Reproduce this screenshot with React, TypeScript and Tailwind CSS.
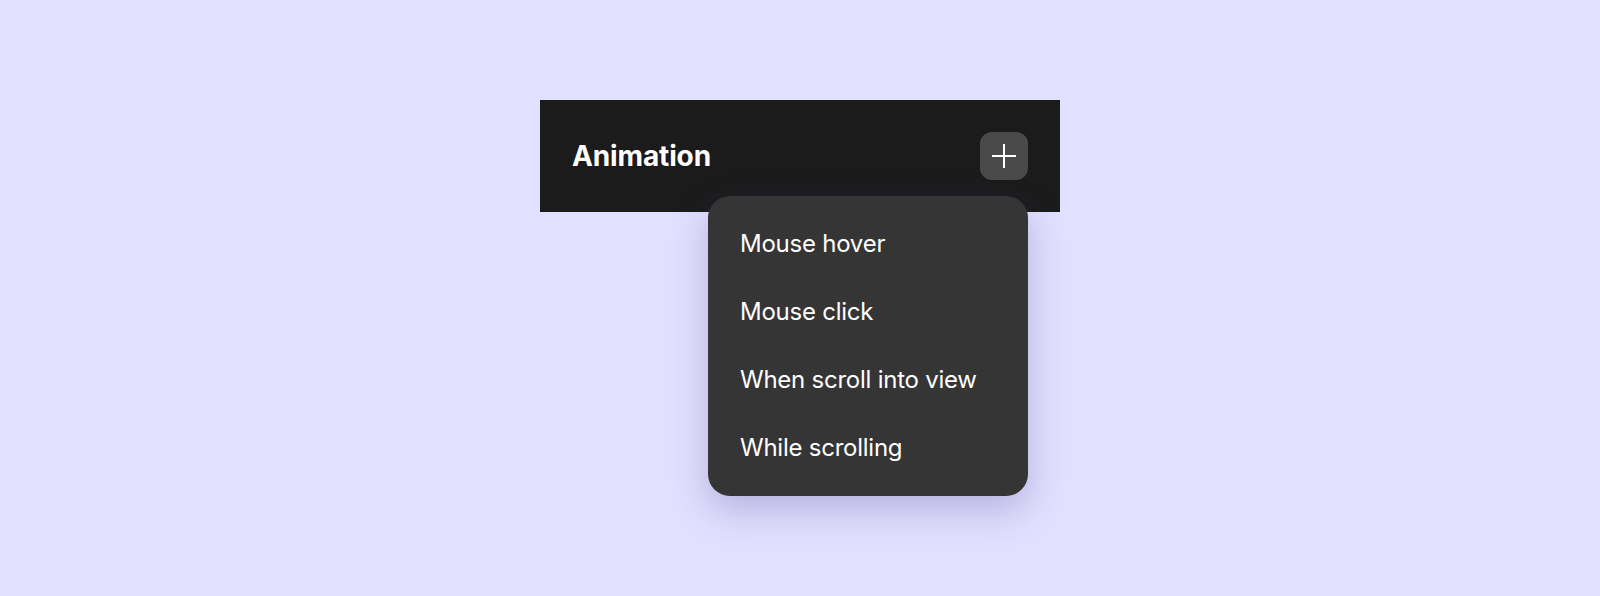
const triggers = ['Mouse hover', 'Mouse click', 'When scroll into view', 'While scrolling']

export default function App() {
  return (
    <div className="min-h-[596px] w-full bg-[#e2e0ff] flex justify-center pt-[100px] font-['Inter',sans-serif]">
      {/* panel header */}
      <div className="relative h-[112px] w-[520px] bg-[#1b1b1b] flex items-center justify-between px-8">
        <h2 className="text-[28px] font-bold text-white tracking-[-0.005em]">Animation</h2>
        <button className="size-12 rounded-xl bg-[#4a4a4a] flex items-center justify-center text-white">
          <svg width="24" height="24" viewBox="0 0 24 24" fill="none" stroke="currentColor" strokeWidth="2">
            <path d="M12 0v24M0 12h24" />
          </svg>
        </button>

        {/* dropdown */}
        <ul className="absolute right-8 top-24 w-80 rounded-[22px] bg-[#353535] p-8 flex flex-col gap-9 shadow-[0_14px_36px_rgba(70,60,140,0.28)]">
          {triggers.map((t) => (
            <li key={t} className="text-2xl text-white font-normal tracking-[-0.01em]">
              {t}
            </li>
          ))}
        </ul>
      </div>
    </div>
  )
}
